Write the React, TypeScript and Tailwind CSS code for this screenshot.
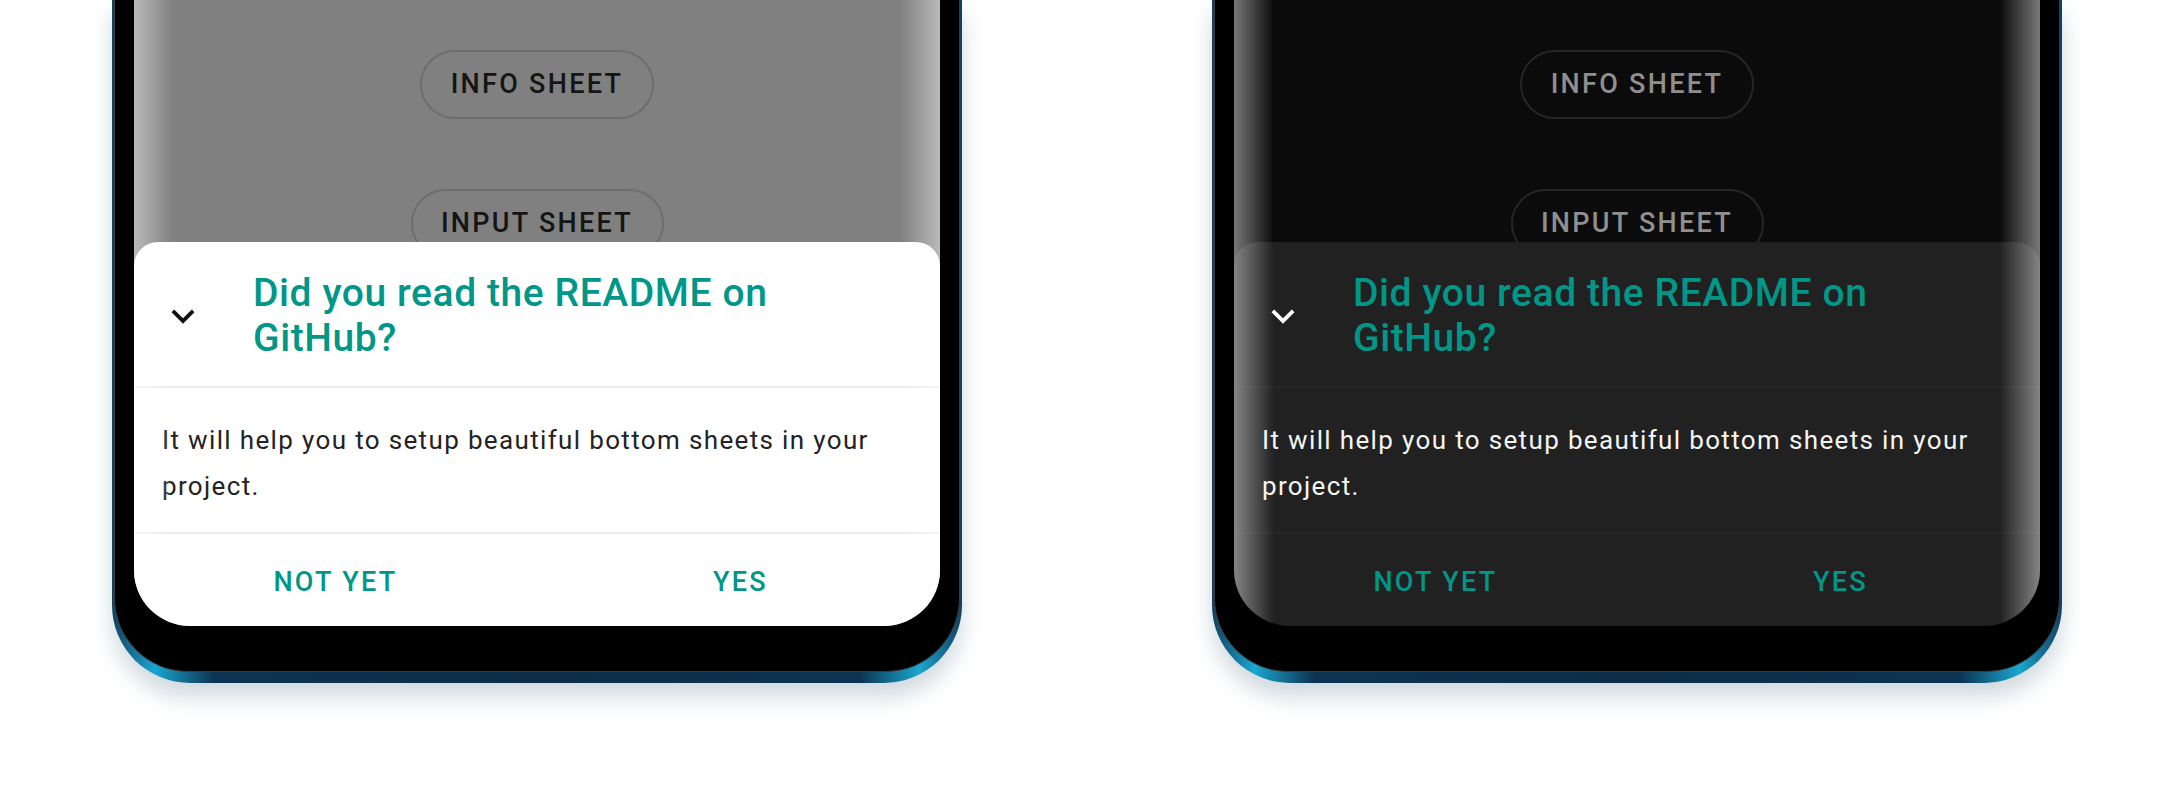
import React from "react";

type Theme = {
  screen: string;
  pill: string;
  sheet: string;
  divider: string;
  chevron: string;
  body: string;
};

const light: Theme = {
  screen: "bg-[#808080]",
  pill: "border-[#6e6e6e] text-[#151515]",
  sheet: "bg-white",
  divider: "border-[#ececec]",
  chevron: "text-[#111111]",
  body: "text-[#232323]",
};

const dark: Theme = {
  screen: "bg-[#0b0b0b]",
  pill: "border-[#262626] text-[#8f8f8f]",
  sheet: "bg-[#212121]",
  divider: "border-[#262626]",
  chevron: "text-white",
  body: "text-[#f4f4f4]",
};

function ExpandMore({ className }: { className?: string }) {
  return (
    <svg viewBox="0 0 24 24" className={className} fill="currentColor">
      <path d="M16.59 8.59L12 13.17 7.41 8.59 6 10l6 6 6-6z" />
    </svg>
  );
}

function Pill({ label, theme, width }: { label: string; theme: Theme; width: string }) {
  return (
    <div
      className={`flex h-[69px] ${width} shrink-0 items-center justify-center rounded-full border-2 text-[27px] font-medium tracking-[0.085em] ${theme.pill}`}
    >
      {label}
    </div>
  );
}

function Sheet({ theme }: { theme: Theme }) {
  return (
    <div className={`flex h-[384px] flex-col rounded-t-[24px] ${theme.sheet}`}>
      {/* header */}
      <div className={`flex items-center border-b-2 pt-[29px] pb-[25px] pl-[26px] ${theme.divider}`}>
        <ExpandMore className={`h-[46px] w-[46px] shrink-0 ${theme.chevron}`} />
        <div className="ml-[47px] w-[600px] text-[39px] leading-[45px] font-medium tracking-[0.015em] text-[#009688]">
          Did you read the README on GitHub?
        </div>
      </div>

      {/* body */}
      <div className={`border-b-2 px-[28px] pt-[29px] pb-[23px] ${theme.divider}`}>
        <p className={`text-[26px] leading-[46px] tracking-[1.35px] ${theme.body}`}>
          It will help you to setup beautiful bottom sheets in your project.
        </p>
      </div>

      {/* actions */}
      <div className="grid flex-1 grid-cols-2 items-center pt-[4px]">
        <button className="text-center text-[27px] font-medium tracking-[0.085em] text-[#009688]">
          NOT YET
        </button>
        <button className="pl-[4px] text-center text-[27px] font-medium tracking-[0.085em] text-[#009688]">
          YES
        </button>
      </div>
    </div>
  );
}

function Phone({ theme }: { theme: Theme }) {
  return (
    <div className="w-[850px] shrink-0 rounded-b-[78px] bg-[linear-gradient(90deg,#123f60_0%,#1aa6d0_5%,#0c3452_12%,#0b2d48_50%,#0c3452_88%,#1aa6d0_95%,#123f60_100%)] px-[2px] pb-[11px] shadow-[0_14px_22px_rgba(40,80,100,0.22)]">
      <div className="rounded-b-[74px] border-x border-b border-[#3a3a3a] bg-black px-[19px] pb-[45px]">
        <div className={`relative flex h-[626px] flex-col overflow-hidden rounded-b-[56px] ${theme.screen}`}>
          <div className="flex h-[242px] shrink-0 flex-col items-center gap-[70px] overflow-hidden pt-[50px]">
            <Pill label="INFO SHEET" theme={theme} width="w-[234px]" />
            <Pill label="INPUT SHEET" theme={theme} width="w-[253px]" />
          </div>
          <Sheet theme={theme} />

          {/* curved glass edge highlight */}
          <div className="pointer-events-none absolute inset-y-0 left-0 w-[40px] bg-linear-to-r from-white/45 to-transparent" />
          <div className="pointer-events-none absolute inset-y-0 right-0 w-[40px] bg-linear-to-l from-white/45 to-transparent" />
        </div>
      </div>
    </div>
  );
}

export default function App() {
  return (
    <div className="flex h-[800px] w-[2180px] items-start gap-[250px] overflow-hidden bg-white pl-[112px] font-['Roboto',sans-serif]">
      <Phone theme={light} />
      <Phone theme={dark} />
    </div>
  );
}
